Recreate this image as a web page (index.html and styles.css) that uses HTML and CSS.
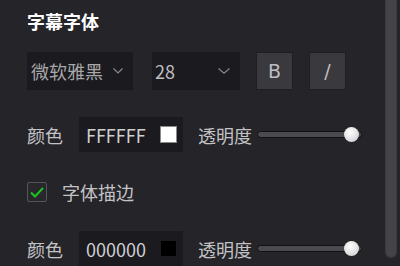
FILE: index.html
```html
<!DOCTYPE html>
<html lang="zh-CN">
<head>
  <meta charset="UTF-8">
  <title>字幕字体</title>
  <link rel="stylesheet" href="styles.css">
</head>
<body>
  <div class="panel">
    <div class="content">
      <div class="title">字幕字体</div>

      <!-- font family / size / style -->
      <div class="row font-row">
        <div class="select family">
          <span>微软雅黑</span>
          <svg class="chevron" width="10" height="6" viewBox="0 0 10 6"><polyline points="0.5,0.5 5,5 9.5,0.5" fill="none" stroke="#8a8a8e" stroke-width="1.2"/></svg>
        </div>
        <div class="select size">
          <span>28</span>
          <svg class="chevron" width="12" height="6" viewBox="0 0 12 6"><polyline points="0.5,0.5 6,5.2 11.5,0.5" fill="none" stroke="#8a8a8e" stroke-width="1.2"/></svg>
        </div>
        <button class="style-btn">B</button>
        <button class="style-btn">/</button>
      </div>

      <div class="row color-row">
        <span class="label">颜色</span>
        <div class="color-input">
          <span>FFFFFF</span>
          <span class="swatch white"></span>
        </div>
        <span class="label">透明度</span>
        <div class="slider">
          <div class="thumb"></div>
        </div>
      </div>

      <div class="row check-row">
        <span class="checkbox">
          <svg width="14" height="11" viewBox="0 0 14 11"><polyline points="1,5.5 5,9.5 13,1" fill="none" stroke="#1fc31f" stroke-width="2"/></svg>
        </span>
        <span class="label">字体描边</span>
      </div>

      <div class="row color-row">
        <span class="label">颜色</span>
        <div class="color-input">
          <span>000000</span>
          <span class="swatch black"></span>
        </div>
        <span class="label">透明度</span>
        <div class="slider">
          <div class="thumb"></div>
        </div>
      </div>
    </div>
    <div class="scrollbar"></div>
  </div>
</body>
</html>
```

FILE: styles.css
```css
body {
  margin: 0;
  width: 400px;
  height: 266px;
  overflow: hidden;
  background-color: #252429;
  font-family: "Noto Sans CJK SC", "Noto Sans", sans-serif;
  color: #bfbfc2;
}

.panel {
  display: flex;
  height: 266px;
}

.content {
  flex: 1;
  padding: 9px 0 0 27px;
}

.scrollbar {
  width: 10px;
  height: 257px;
  margin-right: 3px;
  background-color: #444348;
  border: 1px solid #3a393e;
  border-top: none;
  border-radius: 0 0 6px 6px;
}

.title {
  font-size: 18px;
  font-weight: bold;
  line-height: 24px;
  color: #ffffff;
}

.row {
  display: flex;
  align-items: center;
}

.label {
  font-size: 18px;
  line-height: 24px;
  color: #c3c3c6;
}

.font-row {
  margin-top: 19px;
  height: 38px;
}

.select {
  display: flex;
  align-items: center;
  justify-content: space-between;
  box-sizing: border-box;
  height: 38px;
  padding: 0 10px 0 4px;
  background-color: #1b1a1e;
  font-size: 18px;
  color: #a8a8ab;
}

.select.family {
  width: 106px;
  margin-right: 19px;
}

.select.size {
  width: 88px;
  margin-right: 16px;
  padding-left: 3px;
  color: #bdbdc0;
}

.style-btn {
  box-sizing: border-box;
  width: 37px;
  height: 38px;
  margin-right: 16px;
  padding: 0;
  background-color: #3a393e;
  border: 1px solid #1f1e22;
  color: #bdbdc0;
  font-family: "DejaVu Sans", sans-serif;
  font-size: 19px;
  font-weight: normal;
  line-height: 36px;
}

.color-row {
  height: 35px;
}

.font-row + .color-row {
  margin-top: 27px;
}

.color-input {
  display: flex;
  align-items: center;
  justify-content: space-between;
  box-sizing: border-box;
  width: 104px;
  height: 35px;
  margin: 0 15px 0 16px;
  padding: 0 6px 0 7px;
  background-color: #1b1a1e;
  font-size: 18px;
  color: #cfcfd2;
}

.swatch {
  box-sizing: border-box;
  width: 17px;
  height: 17px;
  border: 1px solid #8a8a8a;
}

.swatch.white {
  background-color: #ffffff;
}

.swatch.black {
  width: 15px;
  height: 15px;
  margin-right: 1px;
  border: none;
  background-color: #000000;
}

.slider {
  position: relative;
  box-sizing: border-box;
  width: 105px;
  height: 7px;
  margin-left: 5px;
  background-color: #4b4a4f;
  border: 1px solid #111113;
  border-radius: 4px;
}

.thumb {
  position: absolute;
  left: 86px;
  top: -5px;
  width: 15px;
  height: 15px;
  border-radius: 50%;
  background: radial-gradient(circle at 40% 35%, #ffffff, #d8d8da 70%, #bcbcbf);
}

.check-row {
  margin-top: 30px;
  height: 20px;
}

.checkbox {
  display: flex;
  align-items: center;
  justify-content: center;
  box-sizing: border-box;
  width: 20px;
  height: 20px;
  margin-right: 15px;
  border: 1px solid #56555a;
  border-radius: 2px;
  background-color: #28272c;
}

.check-row + .color-row {
  margin-top: 29px;
}
```
